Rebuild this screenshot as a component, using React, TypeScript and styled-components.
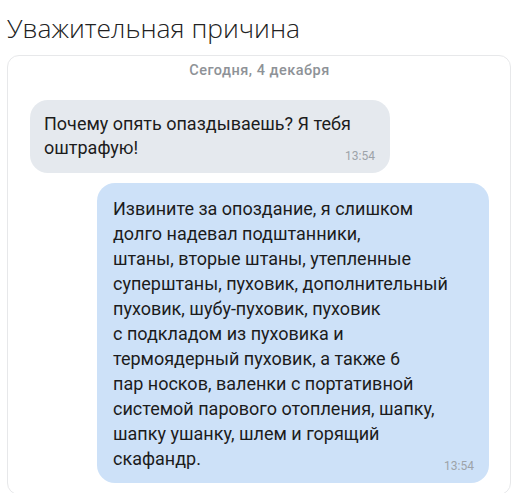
import React from 'react'
import styled, { createGlobalStyle } from 'styled-components'

const GlobalStyle = createGlobalStyle`
  html, body {
    margin: 0;
    padding: 0;
    background: #ffffff;
  }
  body {
    font-family: Roboto, "Liberation Sans", Arial, sans-serif;
    -webkit-font-smoothing: antialiased;
  }
`

const Page = styled.div`
  width: 518px;
  height: 493px;
  overflow: hidden;
  padding: 0 7px;
  box-sizing: border-box;
`

const Title = styled.h1`
  margin: 0;
  padding: 10px 0 0 0;
  height: 55px;
  font-family: "Open Sans", "Noto Sans", sans-serif;
  font-weight: 300;
  font-size: 26.4px;
  line-height: 36px;
  color: #222222;
  box-sizing: border-box;
`

const Card = styled.div`
  height: 440px;
  border: 1px solid #e7e8ea;
  border-radius: 12px;
  padding: 5px 21px 0 22px;
  box-sizing: border-box;
  display: flex;
  flex-direction: column;
`

const DateLabel = styled.div`
  text-align: center;
  font-size: 14.5px;
  font-weight: 500;
  letter-spacing: 0.5px;
  line-height: 20px;
  color: #8e9297;
`

const Bubble = styled.div<{ $own?: boolean }>`
  display: flex;
  flex-direction: column;
  align-self: ${p => (p.$own ? 'flex-end' : 'flex-start')};
  box-sizing: border-box;
  width: ${p => (p.$own ? '392px' : '360px')};
  margin-top: ${p => (p.$own ? '10px' : '19px')};
  padding: ${p => (p.$own ? '13.4px 15px 9.5px 16px' : '12px 15px 10px 14px')};
  background: ${p => (p.$own ? '#cde1f8' : '#e5e9ee')};
  border-radius: 18px;
`

const Text = styled.div<{ $lh: number }>`
  white-space: pre;
  font-size: 18px;
  line-height: ${p => p.$lh}px;
  color: #1c1c1c;
`

const Time = styled.div<{ $lift: number }>`
  align-self: flex-end;
  margin-top: -${p => p.$lift}px;
  font-size: 12px;
  line-height: 13px;
  color: #9da3a9;
`

const incoming = 'Почему опять опаздываешь? Я тебя\nоштрафую!'

const outgoing = [
  'Извините за опоздание, я слишком',
  'долго надевал подштанники,',
  'штаны, вторые штаны, утепленные',
  'суперштаны, пуховик, дополнительный',
  'пуховик, шубу-пуховик, пуховик',
  'с подкладом из пуховика и',
  'термоядерный пуховик, а также 6',
  'пар носков, валенки с портативной',
  'системой парового отопления, шапку,',
  'шапку ушанку, шлем и горящий',
  'скафандр.',
].join('\n')

const App = () => {
  return (
    <>
      <GlobalStyle />
      <Page>
        <Title>Уважительная причина</Title>
        <Card>
          <DateLabel>Сегодня, 4 декабря</DateLabel>
          <Bubble>
            <Text $lh={24}>{incoming}</Text>
            <Time $lift={10}>13:54</Time>
          </Bubble>
          <Bubble $own>
            <Text $lh={25}>{outgoing}</Text>
            <Time $lift={11}>13:54</Time>
          </Bubble>
        </Card>
      </Page>
    </>
  )
}

export default App
